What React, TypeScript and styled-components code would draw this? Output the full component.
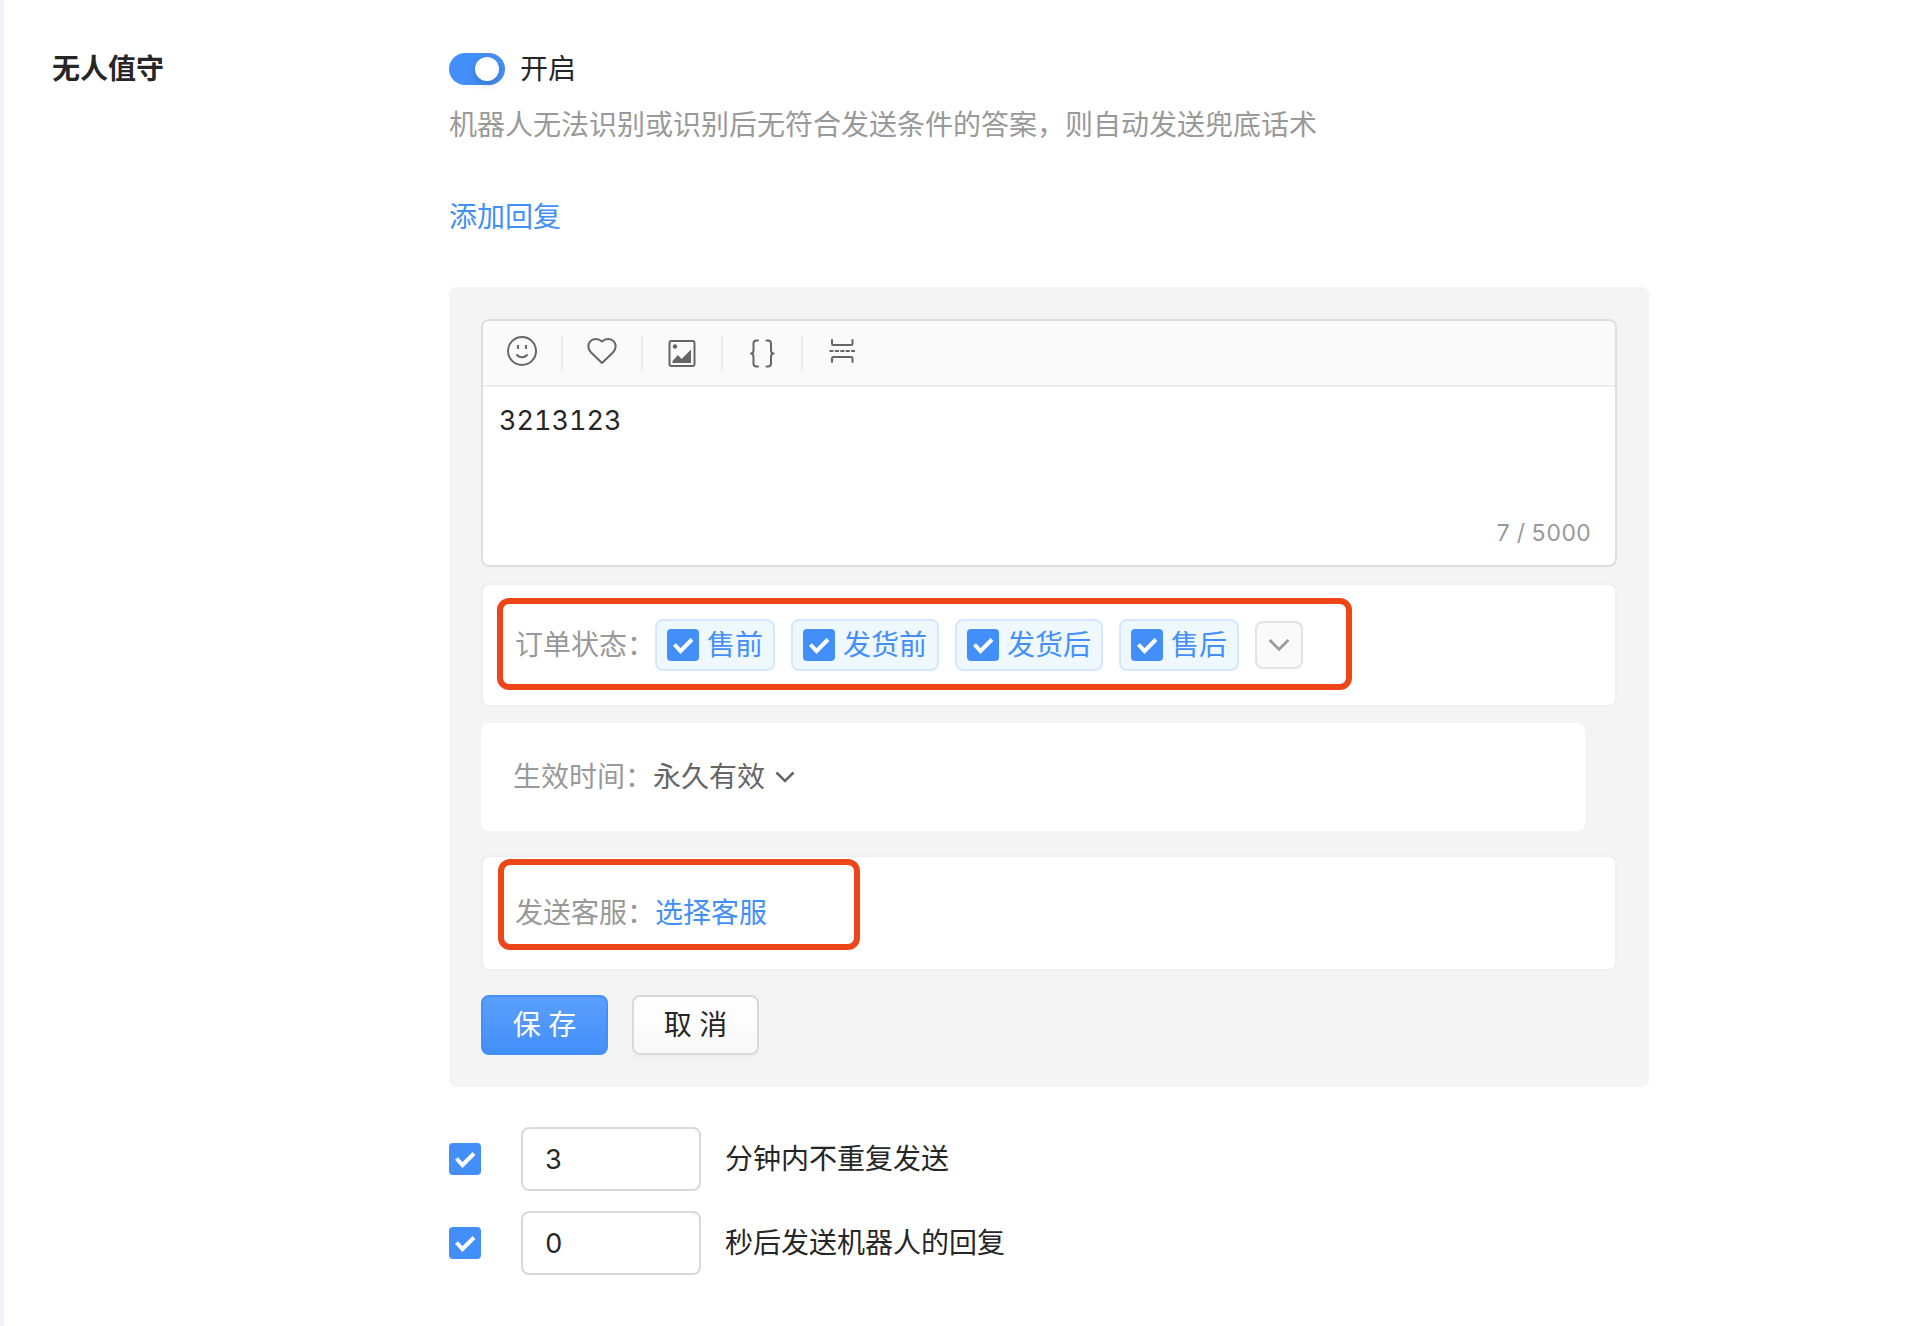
import React, { useState } from 'react';
import styled, { createGlobalStyle } from 'styled-components';

const color = {
  primary: '#438ffa',
  text: '#262626',
  icon: '#666666',
  muted: '#999999',
  panel: '#f4f4f4',
  line: '#eeeeee',
  border: '#d9d9d9',
  mark: '#ee4519',
};

const GlobalStyle = createGlobalStyle`
  *, *::before, *::after { box-sizing: border-box; }
  body {
    margin: 0;
    background: #ffffff;
    color: ${color.text};
    font-family: Inter, "Noto Sans CJK SC", sans-serif;
    font-size: 28px;
    line-height: 44px;
    font-variant-numeric: tabular-nums;
  }
  button, input, select, textarea {
    margin: 0;
    font: inherit;
    font-variant-numeric: inherit;
    color: inherit;
  }
  button, select, input[type='checkbox'] { cursor: pointer; }
`;

const Page = styled.main`
  display: flex;
  min-height: 100vh;
  padding: 47px 48px 48px;
  border-left: 4px solid #f0f2f7;
`;

const SectionTitle = styled.h2`
  flex: 0 0 397px;
  margin: 0;
  font-size: 28px;
  font-weight: 700;
  line-height: 44px;
`;

const Content = styled.div`
  flex: 1;
  min-width: 0;
  max-width: 1200px;
`;

const SwitchLabel = styled.label`
  display: inline-flex;
  align-items: center;
  gap: 15px;
  height: 44px;
  vertical-align: top;
`;

const Switch = styled.input`
  appearance: none;
  display: flex;
  width: 56px;
  height: 32px;
  padding: 4px 6px;
  border-radius: 16px;
  background: #bfbfbf;

  &::before {
    content: '';
    width: 24px;
    height: 24px;
    border-radius: 50%;
    background: #ffffff;
    box-shadow: 0 4px 8px rgba(0, 35, 11, 0.2);
  }
  &:checked {
    justify-content: flex-end;
    background: ${color.primary};
  }
`;

const Hint = styled.p`
  margin: 12px 0 48px;
  color: ${color.muted};
`;

const Link = styled.a`
  color: ${color.primary};
  text-decoration: none;
`;

const Panel = styled.section`
  margin-top: 48px;
  padding: 32px;
  border-radius: 8px;
  background: ${color.panel};
`;

const Editor = styled.div`
  overflow: hidden;
  border: 2px solid #dedede;
  border-radius: 8px;
  background: #ffffff;
`;

const Toolbar = styled.div`
  display: flex;
  align-items: center;
  height: 66px;
  border-bottom: 2px solid ${color.line};
  background: #fafafa;
`;

const ToolButton = styled.button`
  display: flex;
  align-items: center;
  justify-content: center;
  width: 80px;
  height: 36px;
  padding: 0;
  border: 0;
  border-right: 2px solid #ececec;
  background: none;
  color: ${color.icon};

  &:last-child { border-right-color: transparent; }
  svg { width: 32px; height: 32px; }
`;

const MessageBox = styled.textarea`
  display: block;
  width: 100%;
  height: 124px;
  padding: 12px 16px;
  border: 0;
  outline: 0;
  resize: none;
  background: none;
  font-size: 27px;
`;

const Counter = styled.div`
  padding: 0 24px 10px;
  color: ${color.muted};
  font-size: 23px;
  line-height: 44px;
  text-align: right;
`;

const Card = styled.div<{ $top: number }>`
  margin-top: ${(p) => p.$top}px;
  padding: 34px 32px;
  border: 2px solid ${color.line};
  border-radius: 8px;
  background: #ffffff;
`;

const TimeCard = styled.div`
  display: flex;
  align-items: center;
  margin: 16px 32px 0 0;
  padding: 32px;
  border-radius: 8px;
  background: #ffffff;
`;

const FieldRow = styled.div`
  position: relative;
  display: inline-flex;
  align-items: center;
  vertical-align: top;
`;

const FieldName = styled.span`
  color: ${color.muted};
`;

const Mark = styled.div<{ $inset: string }>`
  position: absolute;
  inset: ${(p) => p.$inset};
  border: 6px solid ${color.mark};
  border-radius: 12px;
  pointer-events: none;
`;

const TagList = styled.div`
  display: flex;
  align-items: center;
  gap: 16px;
`;

const Tag = styled.label`
  display: flex;
  align-items: center;
  gap: 8px;
  height: 52px;
  padding: 0 10px;
  border: 2px solid #d4e7fe;
  border-radius: 8px;
  background: #eff7ff;
  color: ${color.primary};
`;

const CheckWrap = styled.span`
  display: grid;
  width: 32px;
  height: 32px;

  > * { grid-area: 1 / 1; }
  svg {
    width: 32px;
    height: 32px;
    pointer-events: none;
  }
`;

const CheckInput = styled.input`
  appearance: none;
  width: 32px;
  height: 32px;
  border: 2px solid ${color.border};
  border-radius: 4px;
  background: #ffffff;

  &:checked {
    border-color: ${color.primary};
    background: ${color.primary};
  }
`;

const MoreButton = styled.button`
  display: flex;
  align-items: center;
  justify-content: center;
  width: 48px;
  height: 48px;
  padding: 0;
  border: 2px solid #e3e3e3;
  border-radius: 8px;
  background: #fafafa;
  color: ${color.muted};
`;

const SelectWrap = styled.span`
  display: flex;
  align-items: center;
  gap: 9px;
  color: ${color.icon};
`;

const PlainSelect = styled.select`
  appearance: none;
  height: 44px;
  padding: 0;
  border: 0;
  background: none;
`;

const Actions = styled.div`
  display: flex;
  gap: 24px;
  margin-top: 24px;
`;

const Button = styled.button<{ $primary?: boolean }>`
  width: 127px;
  height: 60px;
  padding: 0;
  border: 2px solid ${(p) => (p.$primary ? '#438ffa' : '#d9d9d9')};
  border-radius: 8px;
  background: ${(p) =>
    p.$primary
      ? 'linear-gradient(#5a9ffc, #438ffa)'
      : 'linear-gradient(#ffffff, #f8f8f8)'};
  box-shadow: ${(p) => (p.$primary ? 'none' : '0 4px 0 rgba(0, 0, 0, 0.02)')};
  color: ${(p) => (p.$primary ? '#ffffff' : color.text)};
`;

const Rules = styled.div`
  display: grid;
  gap: 20px;
  margin-top: 40px;
`;

const Rule = styled.div`
  display: flex;
  align-items: center;
`;

const NumberInput = styled.input`
  width: 180px;
  height: 64px;
  margin: 0 24px 0 40px;
  padding: 0 22px;
  border: 2px solid ${color.border};
  border-radius: 8px;
  background: #ffffff;
  font-size: 27px;
`;

const SmileIcon = () => (
  <svg viewBox="0 1 32 32" fill="none" stroke="currentColor" strokeWidth="2" overflow="visible" aria-hidden="true">
    <circle cx="16" cy="15" r="14" />
    <path d="M12 9v4M20 9v4" />
    <path d="M11 19c2.6 3 7.400 3 10 0" strokeLinecap="round" />
  </svg>
);

const HeartIcon = () => (
  <svg viewBox="0 1 32 32" fill="none" stroke="currentColor" strokeWidth="2" strokeLinejoin="round" aria-hidden="true">
    <path d="M16 27 4.800 16.200C2 13.400 1.400 8.500 4 5.600 7 2.300 12.200 2 16 5.600c3.800-3.600 9-3.300 12 0 2.600 2.900 2 7.800-.8 10.600Z" />
  </svg>
);

const ImageIcon = () => (
  <svg viewBox="0 1 32 32" fill="none" stroke="currentColor" strokeWidth="2" aria-hidden="true">
    <rect x="3.500" y="5" width="25" height="25" rx="2" />
    <circle cx="9" cy="10.500" r="2.200" fill="currentColor" stroke="none" />
    <path d="M6.500 27v-2l5.500-6 3.500 4L25 13.500V27Z" fill="currentColor" stroke="none" />
  </svg>
);

const BracesIcon = () => (
  <svg viewBox="0 1 32 32" fill="none" stroke="currentColor" strokeWidth="2" strokeLinecap="round" strokeLinejoin="round" aria-hidden="true">
    <path d="M12 4.500h-1.500c-2 0-3 1.200-3 3V14c0 1.800-.8 3.500-2.500 3.500 1.700 0 2.500 1.700 2.500 3.500v6.500c0 1.800 1 3 3 3H12" />
    <path d="M20.500 4.500H22c2 0 3 1.200 3 3V14c0 1.800.8 3.500 2.500 3.500-1.700 0-2.500 1.700-2.500 3.500v6.500c0 1.800-1 3-3 3h-1.500" />
  </svg>
);

const SplitIcon = () => (
  <svg viewBox="0 1 32 32" fill="none" stroke="currentColor" strokeWidth="2" strokeLinejoin="round" aria-hidden="true">
    <path d="M6 4v3.500c0 1 .5 1.500 1.500 1.500h17.500c1 0 1.500-.5 1.500-1.500V4" strokeLinecap="round" />
    <path d="M3.500 15H29" strokeDasharray="4 1.400" />
    <path d="M6 26v-3.500c0-1 .5-1.500 1.500-1.500h17.500c1 0 1.500.5 1.500 1.500V26" strokeLinecap="round" />
  </svg>
);

const ChevronIcon = ({ size }: { size: number }) => (
  <svg width={size} height={size} viewBox="0 0 20 20" fill="none" stroke="currentColor" strokeWidth="2.500" aria-hidden="true">
    <path d="M1.500 5.500 10 14l8.500-8.500" />
  </svg>
);

const Check = ({ id, label, defaultChecked = true }: { id: string; label?: string; defaultChecked?: boolean }) => (
  <CheckWrap>
    <CheckInput id={id} type="checkbox" defaultChecked={defaultChecked} aria-label={label} />
    <svg viewBox="0 0 32 32" fill="none" stroke="#ffffff" strokeWidth="4" aria-hidden="true">
      <path d="M7.500 15.500 13.500 22 25 10.500" />
    </svg>
  </CheckWrap>
);

const tools = [
  { name: '表情', Icon: SmileIcon },
  { name: '收藏', Icon: HeartIcon },
  { name: '图片', Icon: ImageIcon },
  { name: '变量', Icon: BracesIcon },
  { name: '分隔', Icon: SplitIcon },
];

const statuses = ['售前', '发货前', '发货后', '售后'];

const rules = [
  { id: 'repeat', value: '3', text: '分钟内不重复发送' },
  { id: 'delay', value: '0', text: '秒后发送机器人的回复' },
];

export default function App() {
  const [message, setMessage] = useState('3213123');

  return (
    <>
      <GlobalStyle />
      <Page>
        <SectionTitle>无人值守</SectionTitle>
        <Content>
          <SwitchLabel>
            <Switch type="checkbox" role="switch" defaultChecked />
            开启
          </SwitchLabel>
          <Hint>机器人无法识别或识别后无符合发送条件的答案，则自动发送兜底话术</Hint>
          <Link href="#reply">添加回复</Link>

          <Panel id="reply">
            <Editor>
              <Toolbar>
                {tools.map(({ name, Icon }) => (
                  <ToolButton key={name} type="button" aria-label={name}>
                    <Icon />
                  </ToolButton>
                ))}
              </Toolbar>
              <MessageBox
                aria-label="回复内容"
                maxLength={5000}
                value={message}
                onChange={(e) => setMessage(e.target.value)}
              />
              <Counter>{message.length} / 5000</Counter>
            </Editor>

            <Card $top={16}>
              <FieldRow>
                <FieldName>订单状态：</FieldName>
                <TagList>
                  {statuses.map((status, i) => (
                    <Tag key={status} htmlFor={`status-${i}`}>
                      <Check id={`status-${i}`} />
                      {status}
                    </Tag>
                  ))}
                  <MoreButton type="button" aria-label="更多状态">
                    <ChevronIcon size={22} />
                  </MoreButton>
                </TagList>
                <Mark $inset="-21px -49px -19px -18px" />
              </FieldRow>
            </Card>

            <TimeCard>
              <FieldName as="label" htmlFor="period">生效时间：</FieldName>
              <SelectWrap>
                <PlainSelect id="period">
                  <option>永久有效</option>
                </PlainSelect>
                <ChevronIcon size={20} />
              </SelectWrap>
            </TimeCard>

            <Card $top={24}>
              <FieldRow>
                <FieldName>发送客服：</FieldName>
                <Link href="#agents">选择客服</Link>
                <Mark $inset="-32px -93px -15px -17px" />
              </FieldRow>
            </Card>

            <Actions>
              <Button type="button" $primary>保 存</Button>
              <Button type="button">取 消</Button>
            </Actions>
          </Panel>

          <Rules>
            {rules.map((rule) => (
              <Rule key={rule.id}>
                <Check id={`${rule.id}-on`} label={rule.text} />
                <NumberInput id={rule.id} type="text" inputMode="numeric" defaultValue={rule.value} />
                <label htmlFor={rule.id}>{rule.text}</label>
              </Rule>
            ))}
          </Rules>
        </Content>
      </Page>
    </>
  );
}
